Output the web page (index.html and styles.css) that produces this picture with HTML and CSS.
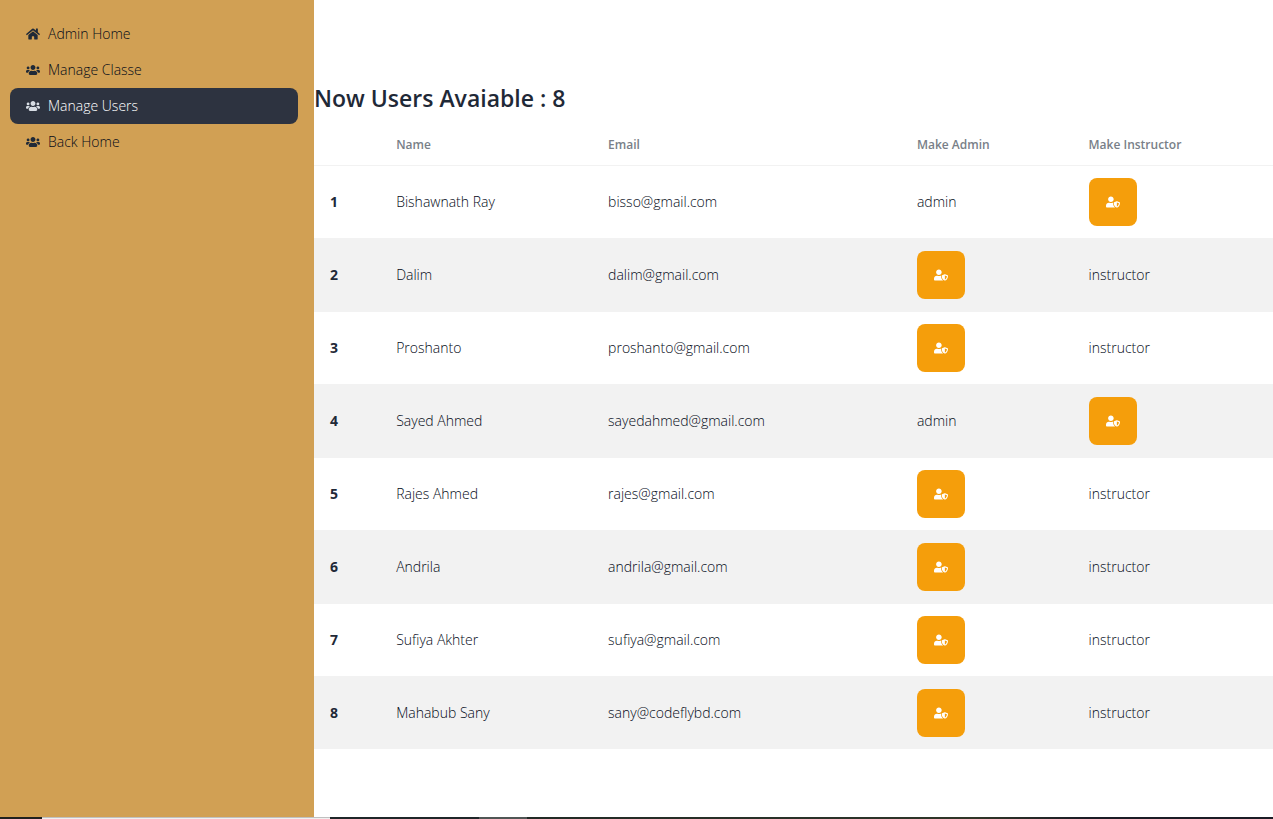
FILE: index.html
```
<!DOCTYPE html>
<html lang="en">
<head>
<meta charset="utf-8">
<meta name="viewport" content="width=device-width, initial-scale=1">
<title>Manage Users</title>
<link rel="stylesheet" href="styles.css">
</head>
<body>
<svg class="sprite" aria-hidden="true">
  <symbol id="home" viewBox="0 0 576 512"><path d="M280.37 148.26L96 300.11V464a16 16 0 0 0 16 16l112.06-.29a16 16 0 0 0 15.92-16V368a16 16 0 0 1 16-16h64a16 16 0 0 1 16 16v95.64a16 16 0 0 0 16 16.05L464 480a16 16 0 0 0 16-16V300L295.67 148.26a12.19 12.19 0 0 0-15.3 0zM571.6 251.47L488 182.56V44.05a12 12 0 0 0-12-12h-56a12 12 0 0 0-12 12v72.61L318.47 43a48 48 0 0 0-61 0L4.34 251.47a12 12 0 0 0-1.6 16.9l25.5 31A12 12 0 0 0 45.15 301l235.22-193.74a12.19 12.19 0 0 1 15.3 0L530.9 301a12 12 0 0 0 16.9-1.6l25.5-31a12 12 0 0 0-1.7-16.93z"/></symbol>
  <symbol id="users" viewBox="0 0 640 512"><path d="M96 224c35.3 0 64-28.7 64-64s-28.7-64-64-64-64 28.7-64 64 28.7 64 64 64zm448 0c35.3 0 64-28.7 64-64s-28.7-64-64-64-64 28.7-64 64 28.7 64 64 64zm32 32h-64c-17.6 0-33.5 7.1-45.1 18.6 40.3 22.1 68.9 62 75.1 109.4h66c17.7 0 32-14.3 32-32v-32c0-35.3-28.7-64-64-64zm-256 0c61.9 0 112-50.1 112-112S381.9 32 320 32 208 82.1 208 144s50.1 112 112 112zm76.8 32h-8.3c-20.8 10-43.9 16-68.5 16s-47.6-6-68.5-16h-8.3C179.6 288 128 339.6 128 403.2V432c0 26.5 21.5 48 48 48h288c26.5 0 48-21.5 48-48v-28.8c0-63.6-51.6-115.2-115.2-115.2zm-223.7-13.4C161.5 263.1 145.6 256 128 256H64c-35.3 0-64 28.7-64 64v32c0 17.7 14.3 32 32 32h65.9c6.3-47.4 34.9-87.3 75.2-109.4z"/></symbol>
  <symbol id="shield" viewBox="0 0 640 512"><path d="M622.3 271.1l-115.2-45c-4.1-1.6-12.6-3.7-22.2 0l-115.2 45c-10.7 4.2-17.7 14-17.7 24.9 0 111.6 68.7 188.8 132.9 213.9 9.6 3.7 18 1.6 22.2 0C558.4 489.9 640 420.5 640 296c0-10.9-7-20.7-17.7-24.9zM496 462.4V273.3l95.5 37.3c-5.6 87.1-60.9 135.4-95.5 151.8zM224 256c70.7 0 128-57.3 128-128S294.7 0 224 0 96 57.3 96 128s57.3 128 128 128zm96 40c0-2.5.8-4.8 1.1-7.2-2.5-.1-4.9-.8-7.5-.8h-16.7c-22.2 10.2-46.9 16-72.9 16s-50.6-5.8-72.9-16h-16.7C60.2 288 0 348.2 0 422.4V464c0 26.5 21.5 48 48 48h352c6.8 0 13.3-1.5 19.2-4-54-42.9-99.2-116.7-99.2-212z"/></symbol>
</svg>
<div class="layout">
  <nav class="sidebar" aria-label="Dashboard">
    <ul class="menu">
      <li><a class="menu-link" href="#admin"><svg class="icon" aria-hidden="true"><use href="#home"/></svg>Admin Home</a></li>
      <li><a class="menu-link" href="#classes"><svg class="icon" aria-hidden="true"><use href="#users"/></svg>Manage Classe</a></li>
      <li><a class="menu-link active" href="#manage-users" aria-current="page"><svg class="icon" aria-hidden="true"><use href="#users"/></svg>Manage Users</a></li>
      <li><a class="menu-link" href="#back"><svg class="icon" aria-hidden="true"><use href="#users"/></svg>Back Home</a></li>
    </ul>
  </nav>
  <main class="content">
    <h1 class="title">Now Users Avaiable : 8</h1>
    <table class="table">
      <colgroup><col class="col-index"><col class="col-name"><col class="col-email"><col class="col-admin"><col></colgroup>
      <thead><tr><td></td><th scope="col">Name</th><th scope="col">Email</th><th scope="col">Make Admin</th><th scope="col">Make Instructor</th></tr></thead>
      <tbody>
        <tr><th scope="row">1</th><td>Bishawnath Ray</td><td>bisso@gmail.com</td><td>admin</td><td><button class="role-btn" type="button" aria-label="Make instructor"><svg class="icon" aria-hidden="true"><use href="#shield"/></svg></button></td></tr>
        <tr><th scope="row">2</th><td>Dalim</td><td>dalim@gmail.com</td><td><button class="role-btn" type="button" aria-label="Make admin"><svg class="icon" aria-hidden="true"><use href="#shield"/></svg></button></td><td>instructor</td></tr>
        <tr><th scope="row">3</th><td>Proshanto</td><td>proshanto@gmail.com</td><td><button class="role-btn" type="button" aria-label="Make admin"><svg class="icon" aria-hidden="true"><use href="#shield"/></svg></button></td><td>instructor</td></tr>
        <tr><th scope="row">4</th><td>Sayed Ahmed</td><td>sayedahmed@gmail.com</td><td>admin</td><td><button class="role-btn" type="button" aria-label="Make instructor"><svg class="icon" aria-hidden="true"><use href="#shield"/></svg></button></td></tr>
        <tr><th scope="row">5</th><td>Rajes Ahmed</td><td>rajes@gmail.com</td><td><button class="role-btn" type="button" aria-label="Make admin"><svg class="icon" aria-hidden="true"><use href="#shield"/></svg></button></td><td>instructor</td></tr>
        <tr><th scope="row">6</th><td>Andrila</td><td>andrila@gmail.com</td><td><button class="role-btn" type="button" aria-label="Make admin"><svg class="icon" aria-hidden="true"><use href="#shield"/></svg></button></td><td>instructor</td></tr>
        <tr><th scope="row">7</th><td>Sufiya Akhter</td><td>sufiya@gmail.com</td><td><button class="role-btn" type="button" aria-label="Make admin"><svg class="icon" aria-hidden="true"><use href="#shield"/></svg></button></td><td>instructor</td></tr>
        <tr><th scope="row">8</th><td>Mahabub Sany</td><td>sany@codeflybd.com</td><td><button class="role-btn" type="button" aria-label="Make admin"><svg class="icon" aria-hidden="true"><use href="#shield"/></svg></button></td><td>instructor</td></tr>
      </tbody>
    </table>
  </main>
</div>
<div class="edge" aria-hidden="true"><span class="edge-start"></span><span class="edge-field"></span><span class="edge-gap"></span><span class="edge-active"></span><span class="edge-rest"></span></div>
</body>
</html>
```
FILE: styles.css
```
* { box-sizing: border-box; }

body {
  margin: 0;
  min-height: 100vh;
  display: flex;
  flex-direction: column;
  background: #fff;
  color: #1f2937;
  font-family: "Segoe UI", "Open Sans", "Noto Sans", sans-serif;
  font-size: 14px;
  font-weight: 300;
  line-height: 20px;
}

.sprite { display: none; }

.icon {
  display: block;
  flex: none;
  width: 14px;
  height: 14px;
  fill: currentColor;
}

.layout {
  flex: 1;
  display: flex;
}

.sidebar {
  flex: 0 0 314px;
  padding: 16px 16px 16px 10px;
  background: #d1a054;
}

.menu {
  margin: 0;
  padding: 0;
  list-style: none;
}

.menu-link {
  display: flex;
  align-items: center;
  gap: 8px;
  padding: 8px 16px;
  border-radius: 8px;
  color: #050b18;
  text-decoration: none;
}

.menu-link .icon { fill: #1f2937; }

.menu-link.active {
  background: #2d3340;
  color: #fff;
}

.menu-link.active .icon { fill: #d7dde4; }

.content {
  flex: 1;
  min-width: 0;
  padding-top: 83px;
}

.title {
  margin: 0 0 12px;
  font-size: 23px;
  line-height: 30px;
  font-weight: 600;
}

.table {
  width: 100%;
  table-layout: fixed;
  border-collapse: collapse;
  text-align: left;
}

.col-index { width: 6.9%; }
.col-name { width: 22.1%; }
.col-email { width: 32.2%; }
.col-admin { width: 17.9%; }

.table th,
.table td {
  padding: 12px 16px;
  vertical-align: middle;
}

.table td { color: #050b18; }
.table th { font-weight: 700; }

.table thead th {
  color: #797f88;
  font-size: 12px;
  line-height: 16px;
  font-weight: 600;
}

.table tr { border-bottom: 1px solid #f2f2f2; }
.table tbody tr:last-child { border-bottom: 0; }
.table tbody tr:nth-child(even) { background: #f2f2f2; }

.role-btn {
  display: flex;
  align-items: center;
  justify-content: center;
  width: 48px;
  height: 48px;
  padding: 0;
  border: 0;
  border-radius: 8px;
  background: #f59e0b;
  color: #fff;
  cursor: pointer;
}

.edge {
  display: flex;
  height: 2px;
}

.edge-start { width: 42px; background: #20211f; }
.edge-field { width: 288px; background: #f0f0f0; border-top: 1px solid #c0c0c0; }
.edge-gap { width: 149px; background: #1f2629; }
.edge-active { width: 48px; background: #505655; }
.edge-rest { flex: 1; background: linear-gradient(90deg, #222a25, #2b3329 45%, #303628 60%, #1b1c25 75%, #1b1c25); }
```
